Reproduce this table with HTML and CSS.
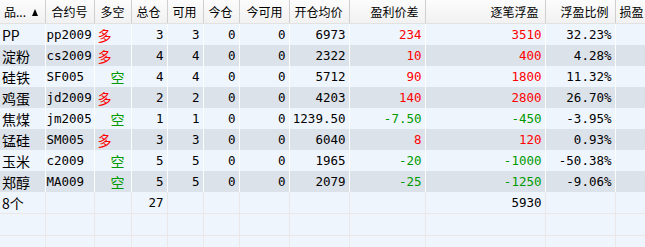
FILE: index.html
```html
<!DOCTYPE html>
<html lang="zh-CN">
<head>
<meta charset="UTF-8">
<title>持仓</title>
<link rel="stylesheet" href="styles.css">
</head>
<body>

<table class="grid">
  <colgroup>
    <col class="c-name"><col class="c-code"><col class="c-dir"><col class="c-num"><col class="c-num">
    <col class="c-num"><col class="c-today"><col class="c-price"><col class="c-diff">
    <col class="c-float"><col class="c-ratio"><col class="c-last">
  </colgroup>
  <thead>
    <tr>
      <th class="first">品...<span class="sort-up"></span></th>
      <th>合约号</th>
      <th>多空</th>
      <th>总仓</th>
      <th>可用</th>
      <th>今仓</th>
      <th>今可用</th>
      <th>开仓均价</th>
      <th>盈利价差</th>
      <th>逐笔浮盈</th>
      <th>浮盈比例</th>
      <th class="last">损盈</th>
    </tr>
  </thead>
  <tbody>
    <tr>
      <td class="cn">PP</td><td class="code">pp2009</td><td class="cn long">多</td>
      <td>3</td><td>3</td><td>0</td><td>0</td><td>6973</td>
      <td class="up">234</td><td class="up">3510</td><td>32.23%</td><td></td>
    </tr>
    <tr class="alt">
      <td class="cn">淀粉</td><td class="code">cs2009</td><td class="cn long">多</td>
      <td>4</td><td>4</td><td>0</td><td>0</td><td>2322</td>
      <td class="up">10</td><td class="up">400</td><td>4.28%</td><td></td>
    </tr>
    <tr>
      <td class="cn">硅铁</td><td class="code">SF005</td><td class="cn short">空</td>
      <td>4</td><td>4</td><td>0</td><td>0</td><td>5712</td>
      <td class="up">90</td><td class="up">1800</td><td>11.32%</td><td></td>
    </tr>
    <tr class="alt">
      <td class="cn">鸡蛋</td><td class="code">jd2009</td><td class="cn long">多</td>
      <td>2</td><td>2</td><td>0</td><td>0</td><td>4203</td>
      <td class="up">140</td><td class="up">2800</td><td>26.70%</td><td></td>
    </tr>
    <tr>
      <td class="cn">焦煤</td><td class="code">jm2005</td><td class="cn short">空</td>
      <td>1</td><td>1</td><td>0</td><td>0</td><td>1239.50</td>
      <td class="down">-7.50</td><td class="down">-450</td><td>-3.95%</td><td></td>
    </tr>
    <tr class="alt">
      <td class="cn">锰硅</td><td class="code">SM005</td><td class="cn long">多</td>
      <td>3</td><td>3</td><td>0</td><td>0</td><td>6040</td>
      <td class="up">8</td><td class="up">120</td><td>0.93%</td><td></td>
    </tr>
    <tr>
      <td class="cn">玉米</td><td class="code">c2009</td><td class="cn short">空</td>
      <td>5</td><td>5</td><td>0</td><td>0</td><td>1965</td>
      <td class="down">-20</td><td class="down">-1000</td><td>-50.38%</td><td></td>
    </tr>
    <tr class="alt">
      <td class="cn">郑醇</td><td class="code">MA009</td><td class="cn short">空</td>
      <td>5</td><td>5</td><td>0</td><td>0</td><td>2079</td>
      <td class="down">-25</td><td class="down">-1250</td><td>-9.06%</td><td></td>
    </tr>
    <tr class="total">
      <td class="cn">8个</td><td></td><td></td>
      <td>27</td><td></td><td></td><td></td><td></td>
      <td></td><td>5930</td><td></td><td></td>
    </tr>
    <tr class="blank">
      <td></td><td></td><td></td><td></td><td></td><td></td><td></td><td></td><td></td><td></td><td></td><td></td>
    </tr>
    <tr class="blank">
      <td></td><td></td><td></td><td></td><td></td><td></td><td></td><td></td><td></td><td></td><td></td><td></td>
    </tr>
  </tbody>
</table>

</body>
</html>
```

FILE: styles.css
```css
body {
  margin: 0;
  padding: 0;
  background-color: #eff5fd;
  overflow: hidden;
}
.grid {
  table-layout: fixed;
  border-collapse: collapse;
  width: 675px;
  font-family: "DejaVu Sans Mono", "Noto Sans CJK SC", monospace;
  font-size: 12.5px;
  color: #000;
}
.c-name { width: 45px; }
.c-code { width: 49px; }
.c-dir { width: 37px; }
.c-num { width: 36px; }
.c-today { width: 50px; }
.c-price { width: 60px; }
.c-diff { width: 76px; }
.c-float { width: 120px; }
.c-ratio { width: 70px; }
.c-last { width: 60px; }

/* header */
.grid th {
  height: 23px;
  padding: 0 6px 0 0;
  font-family: "Noto Sans CJK SC", sans-serif;
  font-size: 12px;
  font-weight: normal;
  text-align: right;
  white-space: nowrap;
  overflow: hidden;
  background: linear-gradient(#fcfcfc, #f1f1f1);
  border-right: 1px solid #cfcfcf;
  border-bottom: 1px solid #e2e2e2;
}
.grid th.first {
  text-align: left;
  padding-left: 4px;
}
.grid th.last {
  text-align: left;
  padding-left: 4px;
}
.sort-up {
  display: inline-block;
  margin-left: 6px;
  vertical-align: 1px;
  border-left: 3.5px solid transparent;
  border-right: 3.5px solid transparent;
  border-bottom: 7px solid #000;
}

/* rows */
.grid td {
  height: 21px;
  padding: 0 3px 0 2px;
  text-align: right;
  white-space: nowrap;
  overflow: hidden;
  border-right: 1px solid rgba(255, 255, 255, 0.75);
}
.grid tr.alt td {
  background-color: #dce2ea;
}
.grid td.cn {
  text-align: left;
  font-family: "Noto Sans CJK SC", sans-serif;
  font-size: 14px;
}
.grid td.code {
  text-align: left;
  padding-left: 1px;
}
.grid td.long {
  color: #ff0000;
  padding-left: 3px;
}
.grid td.short {
  color: #009a00;
  text-align: right;
  padding-right: 6px;
}
.up { color: #ff0000; }
.down { color: #009a00; }

.grid tr.blank td,
.grid tr.total td {
  border-right: 1px solid #ebe7e7;
}
.grid tr.total td {
  border-bottom: 1px solid #ebe7e7;
}
.grid tr.blank td {
  border-bottom: 1px solid #ebe7e7;
}
```
